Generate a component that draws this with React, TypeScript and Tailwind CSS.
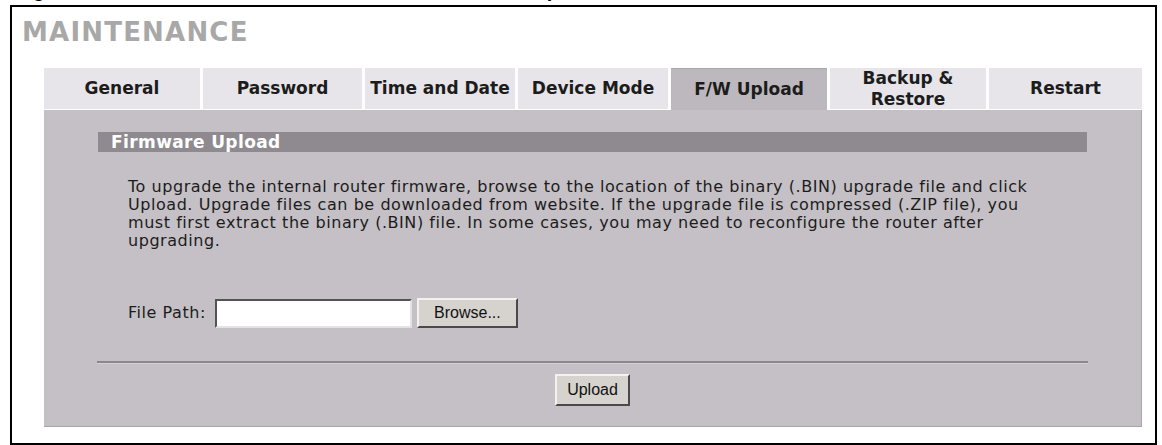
import React from "react";

const tabs: { label: React.ReactNode; w: string; active?: boolean }[] = [
  { label: "General", w: "w-[156px]" },
  { label: "Password", w: "w-[159px]" },
  { label: "Time and Date", w: "w-[150px]" },
  { label: "Device Mode", w: "w-[150px]" },
  { label: "F/W Upload", w: "w-[156px]", active: true },
  {
    label: (
      <>
        Backup &amp;
        <br />
        Restore
      </>
    ),
    w: "w-[156px]",
  },
  { label: "Restart", w: "w-[153px]" },
];

export default function App() {
  return (
    <div className="w-[1162px] h-[445px] bg-white overflow-hidden font-['DejaVu_Sans',sans-serif]">
      {/* clipped caption */}
      <div className="h-[5px] overflow-hidden">
        <div className="flex mt-[-17px] h-[22px] leading-[15px] text-[20px] font-bold text-black font-['Liberation_Sans',Arial,sans-serif] whitespace-nowrap">
          <span className="ml-[15px]">Figure 226</span>
          <span className="ml-[231px]">Maintenance &gt; F/W Upload</span>
        </div>
      </div>
      <div className="ml-[10px] w-[1147px] h-[440px] border-2 border-black flex flex-col">
        <div className="pl-[10px] pt-[10px] h-[61px] text-[26px] leading-[30px] font-bold tracking-[1.2px] text-[#a8a8a8]">
          MAINTENANCE
        </div>
        <div className="ml-[32px] flex flex-col w-[1098px]">
          <div className="flex gap-[3px] h-[42px]">
            {tabs.map((t, i) => (
              <div
                key={i}
                className={
                  t.w +
                  " flex items-center justify-center text-center text-[17px] leading-[21px] font-bold text-[#1c1c1c] " +
                  (t.active
                    ? "bg-[#bcb8bd] border-t border-[#a9a5aa]"
                    : "bg-[#e7e5e9] border-b border-white")
                }
              >
                <span>{t.label}</span>
              </div>
            ))}
          </div>
          <div className="bg-[#c4c0c5] border-r border-b border-[#a9a5aa] h-[317px] pl-[54px] pr-[54px] pt-[22px] flex flex-col">
            <div className="h-[20px] bg-[#8e8a8f] pl-[13px] text-[17px] leading-[20px] font-bold tracking-[0.4px] text-white">
              Firmware Upload
            </div>
            <p className="mt-[26px] pl-[30px] text-[16px] leading-[18px] tracking-[0.55px] text-[#1c1c1c] whitespace-nowrap">
              To upgrade the internal router firmware, browse to the location of the binary (.BIN) upgrade file and click
              <br />
              Upload. Upgrade files can be downloaded from website. If the upgrade file is compressed (.ZIP file), you
              <br />
              must first extract the binary (.BIN) file. In some cases, you may need to reconfigure the router after
              <br />
              upgrading.
            </p>
            <div className="mt-[48px] pl-[30px] flex items-center h-[30px]">
              <span className="text-[16px] tracking-[0.55px] text-[#1c1c1c]">File Path:</span>
              <div className="ml-[9px] w-[197px] h-[29px] bg-white border-2 border-t-[#555255] border-l-[#555255] border-b-[#e4e2e4] border-r-[#e4e2e4]" />
              <button className="ml-[5px] w-[101px] h-[30px] bg-[#d6d3ce] border-2 border-t-[#f4f2ef] border-l-[#f4f2ef] border-b-[#4a484a] border-r-[#4a484a] text-[16px] text-[#111] font-['Liberation_Sans',Arial,sans-serif] leading-none">
                Browse...
              </button>
            </div>
            <div className="mt-[33px] ml-[-1px] mr-[-1px] border-t-2 border-t-[#8a878b] border-b border-b-[#d4d1d5]" />
            <div className="mt-[10px] flex justify-center">
              <button className="w-[75px] h-[32px] bg-[#d6d3ce] border-2 border-t-[#f4f2ef] border-l-[#f4f2ef] border-b-[#4a484a] border-r-[#4a484a] text-[16px] text-[#111] font-['Liberation_Sans',Arial,sans-serif] leading-none">
                Upload
              </button>
            </div>
          </div>
        </div>
      </div>
    </div>
  );
}
